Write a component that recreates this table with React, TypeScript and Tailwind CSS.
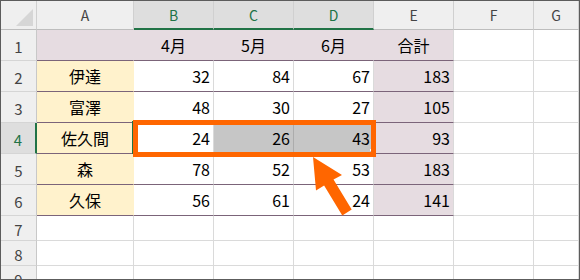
import React from "react";

const names = ["伊達", "富澤", "佐久間", "森", "久保"];
const vals = [
  [32, 84, 67, 183],
  [48, 30, 27, 105],
  [24, 26, 43, 93],
  [78, 52, 53, 183],
  [56, 61, 24, 141],
];
const months = ["4月", "5月", "6月", "合計"];
const colLetters = ["A", "B", "C", "D", "E", "F", "G"];
const colW = ["w-[97px]", "w-[80px]", "w-[80px]", "w-[80px]", "w-[80px]", "w-[80px]", "flex-1"];
const rowH = ["h-[31px]", "h-[31px]", "h-[31px]", "h-[31px]", "h-[31px]", "h-[31px]", "h-[25px]", "h-[25px]", "h-[25px]"];

function getCell(r: number, c: number) {
  let text = "";
  let align = "justify-end pr-[3px]";
  let bg = "bg-white";
  let br = "border-r-[#dadada]";
  let bb = "border-b-[#dadada]";
  if (c <= 4 && r >= 1 && r <= 6) bb = "border-b-[#7b6479]";
  if (r === 1 && c <= 4) {
    bg = "bg-[#e6dce1]";
    br = c === 4 ? "border-r-[#dadada]" : "border-r-[#e6dce1]";
    if (c >= 1) {
      text = months[c - 1];
      align = "justify-center";
    }
  }
  if (r >= 2 && r <= 6) {
    const i = r - 2;
    if (c === 0) {
      bg = "bg-[#fff2cc]";
      br = "border-r-[#fff2cc]";
      text = names[i];
      align = "justify-center";
    } else if (c <= 4) {
      text = String(vals[i][c - 1]);
      if (c === 4) bg = "bg-[#e6dce1]";
    }
  }
  if (r === 4 && (c === 2 || c === 3)) {
    bg = "bg-[#c6c6c6]";
    if (c === 2) br = "border-r-[#acacac]";
  }
  return { text, align, bg, br, bb };
}

export default function App() {
  const rows = [1, 2, 3, 4, 5, 6, 7, 8, 9];
  return (
    <div className="relative w-[580px] h-[280px] overflow-hidden border border-[#5c5c5c] bg-white font-['Noto_Sans_CJK_JP',sans-serif] flex flex-col">
      {/* column header */}
      <div className="flex h-[29px] shrink-0">
        <div className="relative w-[36px] shrink-0 border-r border-b border-r-[#d0d0d0] border-b-[#bdbdbd] bg-[#efefef]">
          <svg className="absolute left-0 top-0" width="36" height="28">
            <polygon points="15,25 32,8 32,25" fill="#d6d6d6" />
          </svg>
        </div>
        {colLetters.map((l, c) => {
          const sel = c >= 1 && c <= 3;
          return (
            <div
              key={l}
              className={
                "shrink-0 flex items-center justify-center text-[14px] leading-none border-r border-r-[#d0d0d0] " +
                colW[c] +
                (sel
                  ? " bg-[#dedede] border-b-2 border-b-[#217346] text-[#217346]"
                  : " bg-[#efefef] border-b border-b-[#bdbdbd] text-[#444444]")
              }
            >
              <span className={sel ? "pt-[1px]" : ""}>{l}</span>
            </div>
          );
        })}
      </div>
      {rows.map((r, ri) => (
        <div key={r} className={"flex shrink-0 " + rowH[ri]}>
          <div
            className={
              "w-[36px] shrink-0 flex items-center justify-center text-[15px] leading-none border-b border-b-[#d5d5d5] pt-[3px] " +
              (r === 4
                ? "bg-[#dedede] border-r-2 border-r-[#217346] text-[#217346]"
                : "bg-[#efefef] border-r border-r-[#c8c8c8] text-[#444444]")
            }
          >
            {r}
          </div>
          {colLetters.map((_, c) => {
            const cell = getCell(r, c);
            return (
              <div
                key={c}
                className={
                  "shrink-0 flex items-center border-r border-b text-[16px] leading-none text-black " +
                  colW[c] +
                  " " +
                  cell.align +
                  " " +
                  cell.bg +
                  " " +
                  cell.br +
                  " " +
                  cell.bb
                }
              >
                {cell.text}
              </div>
            );
          })}
        </div>
      ))}
      {/* selection green edge */}
      <div className="absolute left-[131px] top-[120px] w-[2px] h-[33px] bg-[#217346]" />
      {/* fill handle */}
      <div className="absolute left-[369px] top-[148px] w-[2px] h-[2px] bg-white" />
      {/* orange highlight */}
      <div className="absolute left-[132px] top-[119px] w-[243px] h-[37px] border-[5px] border-[#ff6600]" />
      {/* arrow */}
      <svg className="absolute left-[-1px] top-[-1px] pointer-events-none" width="580" height="280">
        <polygon
          points="313,157 342,175 333.5,179.6 351.7,209.6 342.3,215.4 324.1,185.4 316,190.5"
          fill="#ff6600"
        />
      </svg>
    </div>
  );
}
